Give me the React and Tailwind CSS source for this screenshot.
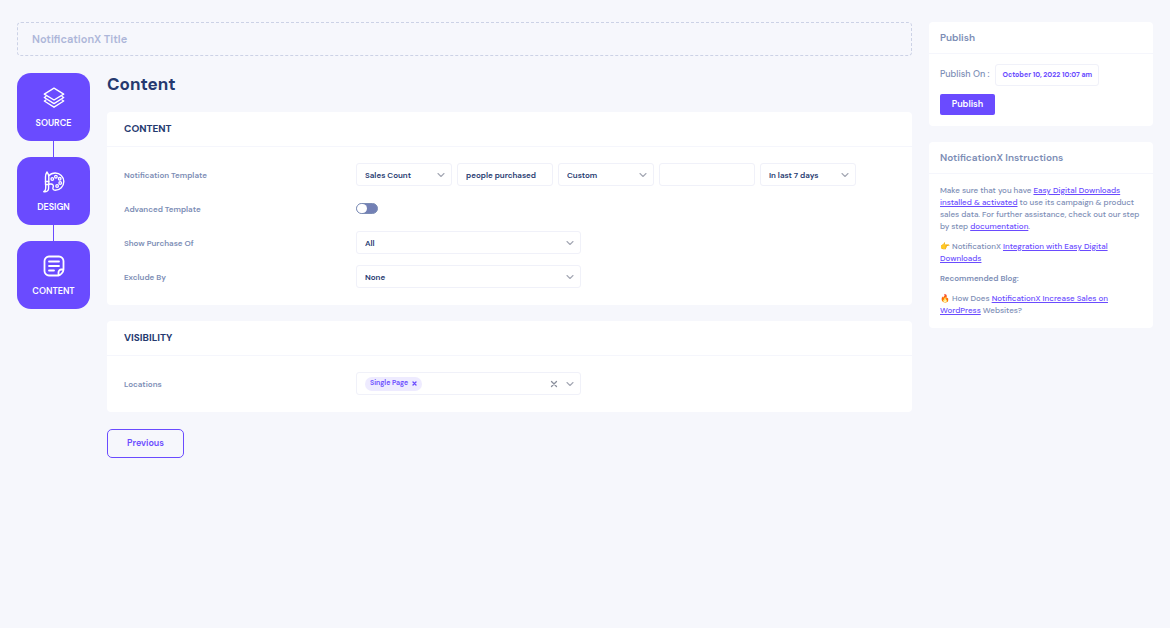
import { useState } from "react";

const stroke = { fill: "none", stroke: "currentColor", strokeLinecap: "round", strokeLinejoin: "round" };

const SourceIcon = () => (
  <svg className="h-[22px] w-[22px]" viewBox="0 0 22 22" strokeWidth="1.4" aria-hidden="true" {...stroke}>
    <path d="M11 1.2 20.7 7.1 11 13 1.3 7.1Z" />
    <path d="M2.9 9.5 1.3 10.5 11 16.6l9.7-6.1-1.6-1" />
    <path d="M2.9 13 1.3 14 11 20.2l9.7-6.2-1.6-1" />
  </svg>
);

const DesignIcon = () => (
  <svg className="h-[22px] w-[22px]" viewBox="0 0 22 22" strokeWidth="1.4" aria-hidden="true" {...stroke}>
    <path d="M4 1C2.8 2.7 2.5 4.3 2.5 6v7.5h3.3V6C5.8 4.3 5.3 2.7 4 1Z" />
    <path d="M2.5 10.5h3.3M2.7 13.5v3.7c0 1.6-.7 2.7-1.9 3.5 3 .4 4.8-1 4.8-3.5v-3.7" />
    <path d="M5.8 4.8C7.3 3 9.6 2 12.2 2a8.6 8.6 0 1 1 0 17.2c-1.9 0-2.8-1.3-2.1-2.8.9-1.8-.5-3.7-2.5-3.4l-1.8.3" />
    <g strokeWidth="1.3">
      <circle cx="9.3" cy="8" r="1.3" />
      <circle cx="12.9" cy="5.7" r="1.3" />
      <circle cx="16.7" cy="7.8" r="1.3" />
      <circle cx="17.2" cy="12" r="1.3" />
      <circle cx="14.1" cy="15" r="1.3" />
    </g>
  </svg>
);

const ContentIcon = () => (
  <svg className="h-[22px] w-[22px]" viewBox="0 0 22 22" strokeWidth="1.8" aria-hidden="true" {...stroke}>
    <path d="M20.5 14.5V6A4.5 4.5 0 0 0 16 1.5H6A4.5 4.5 0 0 0 1.5 6v10A4.5 4.5 0 0 0 6 20.5h9.5c1.7 0 5-3.3 5-6h-2.3a2.7 2.7 0 0 0-2.7 2.7v3.3" />
    <path d="M6 6.5h10M6 11h10M6 15.5h5" />
  </svg>
);

const Chevron = () => (
  <svg className="h-2 w-2 text-[#a4a8b4]" viewBox="0 0 8 8" strokeWidth="1.1" aria-hidden="true" {...stroke}>
    <path d="M1 2.5 4 5.5 7 2.5" />
  </svg>
);

const STEPS = [
  { label: "SOURCE", Icon: SourceIcon },
  { label: "DESIGN", Icon: DesignIcon },
  { label: "CONTENT", Icon: ContentIcon },
];

const box = "h-[23px] rounded-[3px] border border-[#f0f1f9] bg-white px-2 text-[8px] font-semibold text-[#25396f] outline-none";

function Select({ id, label, options, className }) {
  return (
    <div className={`relative ${className}`}>
      <select id={id} aria-label={label} className={`${box} block w-full appearance-none`}>
        {options.map((o) => <option key={o}>{o}</option>)}
      </select>
      <span className="pointer-events-none absolute inset-y-0 right-[7px] flex items-center">
        <Chevron />
      </span>
    </div>
  );
}

function Row({ label, htmlFor, children }) {
  return (
    <div className="flex h-[23px] items-center">
      <label htmlFor={htmlFor} className="w-[232px] shrink-0 text-[8px] leading-3 font-semibold text-[#7c8db5]">{label}</label>
      {children}
    </div>
  );
}

function Section({ title, children }) {
  return (
    <section className="rounded bg-white">
      <h2 className="border-b border-[#f5f6fc] px-[17px] py-[9px] text-[10px] leading-4 font-bold text-[#25396f]">{title}</h2>
      <div className="flex flex-col gap-[11px] px-[17px] pt-4 pb-[17px]">{children}</div>
    </section>
  );
}

function Panel({ title, children }) {
  return (
    <section className="rounded bg-white text-[#7c8db5]">
      <h2 className="border-b border-[#f5f6fc] px-[11px] pt-2 pb-[7px] text-[10px] leading-4 font-semibold">{title}</h2>
      {children}
    </section>
  );
}

const Link = ({ children }) => (
  <a href="#" className="text-[#6a4bff] underline">{children}</a>
);

export default function App() {
  const [advanced, setAdvanced] = useState(false);
  const [locations, setLocations] = useState(["Single Page"]);

  return (
    <div className="flex min-h-screen items-start gap-[17px] bg-[#f6f7fc] px-[17px] pt-[22px] pb-8 font-['DM_Sans',Inter,sans-serif]">
      <main className="min-w-0 flex-1">
        <input
          aria-label="NotificationX Title"
          placeholder="NotificationX Title"
          className="block h-[34px] w-full rounded border border-dashed border-[#ccd2e6] px-[14px] text-[11px] font-semibold outline-none placeholder:text-[#adb6d9]"
        />

        <div className="mt-[17px] flex items-start gap-[17px]">
          <nav className="flex w-[73px] shrink-0 flex-col items-center">
            {STEPS.map(({ label, Icon }, i) => (
              <div key={label} className="flex w-full flex-col items-center">
                {i > 0 && <div className="h-4 w-px bg-[#6a4bff]" />}
                <button className="flex h-[68px] w-full flex-col items-center justify-center gap-2 rounded-[14px] bg-[#6a4bff] pt-0.5 text-[9px] leading-3 font-semibold text-white">
                  <Icon />
                  {label}
                </button>
              </div>
            ))}
          </nav>

          <div className="min-w-0 flex-1">
            <h1 className="mb-4 text-[17px] leading-[23px] font-bold text-[#25396f]">Content</h1>

            <div className="flex flex-col gap-4">
              <Section title="CONTENT">
                <Row label="Notification Template" htmlFor="template">
                  <div className="flex gap-[5px]">
                    <Select id="template" className="w-24" options={["Sales Count"]} />
                    <input aria-label="Action text" defaultValue="people purchased" className={`${box} w-24`} />
                    <Select label="Product" className="w-24" options={["Custom"]} />
                    <input aria-label="Custom text" className={`${box} w-24`} />
                    <Select label="Period" className="w-24" options={["In last 7 days"]} />
                  </div>
                </Row>
                <Row label="Advanced Template" htmlFor="advanced">
                  <input
                    id="advanced"
                    type="checkbox"
                    role="switch"
                    checked={advanced}
                    onChange={(e) => setAdvanced(e.target.checked)}
                    className="flex h-[11px] w-[22px] appearance-none rounded-full border border-[#7c8db5] bg-[#7380b5] before:h-[9px] before:w-[10px] before:rounded-full before:bg-white checked:justify-end checked:bg-[#6a4bff]"
                  />
                </Row>
                <Row label="Show Purchase Of" htmlFor="purchase">
                  <Select id="purchase" className="w-[225px]" options={["All"]} />
                </Row>
                <Row label="Exclude By" htmlFor="exclude">
                  <Select id="exclude" className="w-[225px]" options={["None"]} />
                </Row>
              </Section>

              <Section title="VISIBILITY">
                <Row label="Locations" htmlFor="locations">
                  <div className={`${box} flex w-[225px] items-center pr-[6px]`}>
                    {locations.map((l) => (
                      <span key={l} className="flex h-[14px] items-center gap-1 rounded-full bg-[#eeebff] px-[5px] text-[7px] text-[#6a4bff]">
                        {l}
                        <button aria-label={`Remove ${l}`} className="flex" onClick={() => setLocations(locations.filter((x) => x !== l))}>
                          <svg className="h-[5px] w-[5px]" viewBox="0 0 6 6" strokeWidth="1.6" {...stroke}><path d="m1.2 1.2 3.6 3.6m0-3.6L1.2 4.8" /></svg>
                        </button>
                      </span>
                    ))}
                    <input id="locations" className="min-w-0 flex-1 outline-none" />
                    <button aria-label="Clear all" className="mr-2 flex text-[#8a8f9c]" onClick={() => setLocations([])}>
                      <svg className="h-2 w-2" viewBox="0 0 8 8" strokeWidth="1.3" {...stroke}><path d="m1.5 1.5 5 5m0-5-5 5" /></svg>
                    </button>
                    <Chevron />
                  </div>
                </Row>
              </Section>
            </div>

            <button className="mt-[17px] h-[29px] w-[77px] rounded-[5px] border border-[#6a4bff] text-[9px] font-semibold text-[#6a4bff]">Previous</button>
          </div>
        </div>
      </main>

      <aside className="flex w-[224px] shrink-0 flex-col gap-4">
        <Panel title="Publish">
          <div className="px-[11px] pt-[10px] pb-[11px]">
            <div className="flex items-center gap-[6px] text-[9px] font-medium">
              <span>Publish On :</span>
              <button className="h-[22px] rounded-[3px] border border-[#f0f1f9] px-[6px] text-[7px] font-bold text-[#6a4bff]">October 10, 2022 10:07 am</button>
            </div>
            <button className="mt-2 flex h-[21px] w-[55px] items-center justify-center rounded-xs bg-[#6a4bff] text-[9px] font-semibold text-white">Publish</button>
          </div>
        </Panel>

        <Panel title="NotificationX Instructions">
          <div className="flex flex-col gap-2 px-[11px] pt-[10px] pb-3 text-[8px] leading-3 font-medium">
            <p>
              Make sure that you have <Link>Easy Digital Downloads installed &amp; activated</Link> to use its campaign &amp; product sales data. For further assistance, check out our step by step <Link>documentation</Link>.
            </p>
            <p>👉 NotificationX <Link>Integration with Easy Digital Downloads</Link></p>
            <p className="font-semibold">Recommended Blog:</p>
            <p>🔥 How Does <Link>NotificationX Increase Sales on WordPress</Link> Websites?</p>
          </div>
        </Panel>
      </aside>
    </div>
  );
}
